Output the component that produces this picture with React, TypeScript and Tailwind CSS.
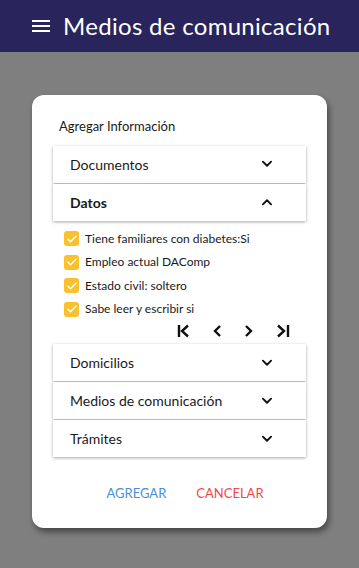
import React, { useState } from "react";

const font = { fontFamily: "'Lato', 'Open Sans', sans-serif" };

const Chevron = ({ up }: { up?: boolean }) => (
  <svg width="14" height="14" viewBox="0 0 24 24" className={up ? "rotate-180" : ""}>
    <path d="M5 8l7 7 7-7" fill="none" stroke="#111" strokeWidth="3.2" strokeLinecap="round" strokeLinejoin="round" />
  </svg>
);

const Check = () => (
  <span className="flex h-[15px] w-[15px] items-center justify-center rounded-[3px] bg-[#fbc02d]">
    <svg width="12" height="12" viewBox="0 0 24 24">
      <path d="M4 12.5l5 5 11-11" fill="none" stroke="#fff" strokeWidth="3" strokeLinecap="round" strokeLinejoin="round" />
    </svg>
  </span>
);

const Panel = ({ title, open, bold, onClick }: { title: string; open?: boolean; bold?: boolean; onClick?: () => void }) => (
  <button
    onClick={onClick}
    className="flex h-[37px] w-full items-center justify-between bg-white pl-[17px] pr-[32px] shadow-[0_1px_3px_rgba(0,0,0,0.35)] mb-px"
  >
    <span className={`text-[14px] text-[#1a1a1a] ${bold ? "font-bold" : ""}`}>{title}</span>
    <Chevron up={open} />
  </button>
);

const datos = [
  "Tiene familiares con diabetes:Si",
  "Empleo actual DAComp",
  "Estado civil: soltero",
  "Sabe leer y escribir si",
];

export default function App() {
  const [open, setOpen] = useState("Datos");

  return (
    <div className="flex h-[568px] w-[359px] flex-col bg-[#7f7f7f]" style={font}>
      <header className="flex h-[52px] items-center gap-[13px] bg-[#2a245c] pl-[32px] text-white">
        <svg width="18" height="14" viewBox="0 0 18 14">
          <rect y="1" width="18" height="2" fill="#fff" />
          <rect y="6" width="18" height="2" fill="#fff" />
          <rect y="11" width="18" height="2" fill="#fff" />
        </svg>
        <h1 className="text-[24px] tracking-[0.3px]">Medios de comunicación</h1>
      </header>

      <div className="px-[32px] pt-[43px]">
        <div className="rounded-[12px] bg-white px-[21px] pb-[24px] pt-[22px] shadow-[2px_4px_6px_rgba(0,0,0,0.45)]">
          <h2 className="mb-[9px] pl-[6px] text-[13px] text-[#1a1a1a]">Agregar Información</h2>

          <Panel title="Documentos" open={open === "Documentos"} onClick={() => setOpen(open === "Documentos" ? "" : "Documentos")} />
          <Panel title="Datos" bold open={open === "Datos"} onClick={() => setOpen(open === "Datos" ? "" : "Datos")} />

          {open === "Datos" && (
            <div className="pt-[9px]">
              <ul className="flex flex-col gap-[7.5px] pl-[11px]">
                {datos.map((d) => (
                  <li key={d} className="flex h-[16px] items-center gap-[6px]">
                    <Check />
                    <span className="text-[12px] leading-[16px] text-[#1a1a1a]">{d}</span>
                  </li>
                ))}
              </ul>
              <div className="flex h-[23px] items-center justify-end gap-[22px] pr-[16px] pt-[5px]">
                <svg width="13" height="14" viewBox="0 0 13 14">
                  <path d="M2 1v12M11 1.5L5 7l6 5.5" fill="none" stroke="#111" strokeWidth="2.4" />
                </svg>
                <svg width="10" height="14" viewBox="0 0 10 14">
                  <path d="M8 2L3 7l5 5" fill="none" stroke="#111" strokeWidth="2.4" />
                </svg>
                <svg width="10" height="14" viewBox="0 0 10 14">
                  <path d="M2 2l5 5-5 5" fill="none" stroke="#111" strokeWidth="2.4" />
                </svg>
                <svg width="14" height="14" viewBox="0 0 14 14">
                  <path d="M12 1v12M2 1.5L8 7l-6 5.5" fill="none" stroke="#111" strokeWidth="2.4" />
                </svg>
              </div>
            </div>
          )}

          <div className="mt-[4px]">
            <Panel title="Domicilios" />
            <Panel title="Medios de comunicación" />
            <Panel title="Trámites" />
          </div>

          <div className="mt-[27px] flex justify-center gap-[30px] pl-[11px] text-[13px]">
            <button className="text-[#4a8fd8]">AGREGAR</button>
            <button className="text-[#f44848]">CANCELAR</button>
          </div>
        </div>
      </div>
    </div>
  );
}
